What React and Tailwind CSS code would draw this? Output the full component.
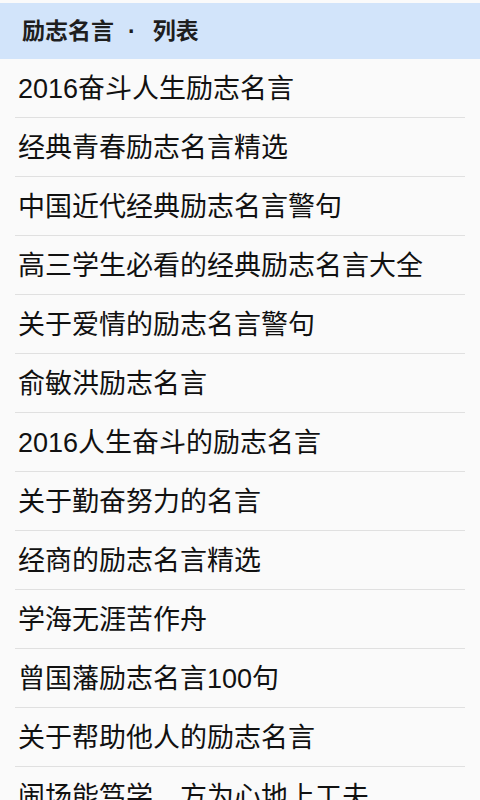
const items = [
  '2016奋斗人生励志名言',
  '经典青春励志名言精选',
  '中国近代经典励志名言警句',
  '高三学生必看的经典励志名言大全',
  '关于爱情的励志名言警句',
  '俞敏洪励志名言',
  '2016人生奋斗的励志名言',
  '关于勤奋努力的名言',
  '经商的励志名言精选',
  '学海无涯苦作舟',
  '曾国藩励志名言100句',
  '关于帮助他人的励志名言',
  '闹场能笃学，方为心地上工夫',
]

export default function App() {
  return (
    <div
      className="w-[480px] h-[800px] overflow-hidden bg-[#fafafa] pt-[3px]"
      style={{ fontFamily: '"Liberation Sans", "Noto Sans CJK SC", sans-serif' }}
    >
      <div className="h-[56px] bg-[#d2e4fa] flex items-center pl-[22px]">
        <span className="text-[23px] font-bold text-[#1e1e1e] leading-none">励志名言</span>
        <span className="text-[23px] font-bold text-[#1e1e1e] leading-none ml-[14px] mr-[17px]">·</span>
        <span className="text-[23px] font-bold text-[#1e1e1e] leading-none">列表</span>
      </div>
      <ul>
        {items.map((t) => (
          <li key={t} className="mx-[15px] h-[59px] border-b border-[#e0e0e0] flex items-center pl-[3px] pt-[2px]">
            <span className="text-[27px] text-[#111] leading-none whitespace-nowrap">{t}</span>
          </li>
        ))}
      </ul>
    </div>
  )
}
